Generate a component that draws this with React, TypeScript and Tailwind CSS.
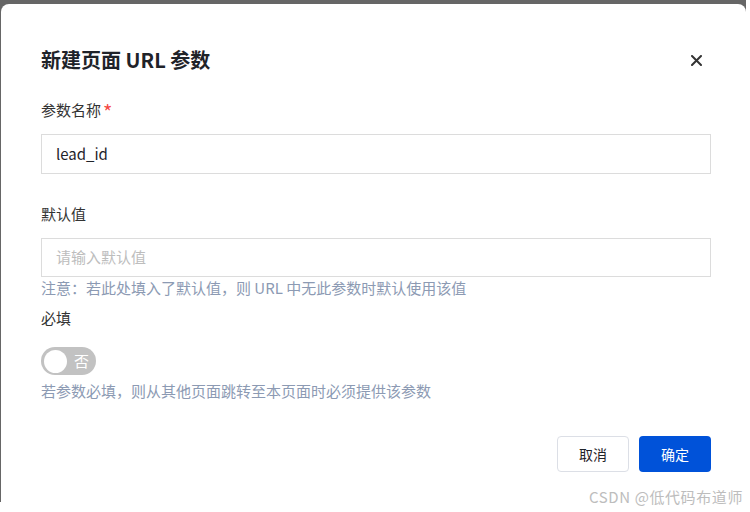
import React from "react";

export default function App() {
  const font = { fontFamily: '"Noto Sans CJK SC", "Noto Sans", "Liberation Sans", sans-serif' };
  return (
    <div className="relative w-[750px] h-[512px] bg-white overflow-hidden" style={font}>
      <div className="w-[746px] h-[502px] bg-[#666666] pt-[4px] pl-[1px]">
        <div className="w-[745px] h-[498px] bg-white rounded-t-[8px] pt-[42px] pl-[40px] pr-[35px]">
          <div className="flex items-center justify-between h-[28px]">
            <div className="text-[20px] leading-[28px] font-bold text-[#1f2329]">新建页面 URL 参数</div>
            <svg width="11" height="11" viewBox="0 0 11 11" className="mr-[9px]">
              <path d="M1 1 L10 10 M10 1 L1 10" stroke="#333" strokeWidth="2" strokeLinecap="round" />
            </svg>
          </div>

          <div className="mt-[25px] h-[22px] leading-[22px] text-[15px] text-[#333] flex items-center">
            参数名称<span className="text-[#f54a45] text-[20px] ml-[2px] leading-[22px] mt-[4px]">*</span>
          </div>
          <div className="mt-[13px] w-[670px] h-[40px] border border-[#dcdcdc] flex items-center px-[14px] text-[15px] text-[#1f2329]">
            lead_id
          </div>

          <div className="mt-[29px] h-[22px] leading-[22px] text-[15px] text-[#333]">默认值</div>
          <div className="mt-[13px] w-[670px] h-[39px] border border-[#dcdcdc] flex items-center px-[14px] text-[15px] text-[#bdbdbd]">
            请输入默认值
          </div>
          <div className="h-[22px] leading-[22px] text-[15px] text-[#8c9ab3]">
            注意：若此处填入了默认值，则 URL 中无此参数时默认使用该值
          </div>

          <div className="mt-[8px] h-[22px] leading-[22px] text-[15px] text-[#333]">必填</div>
          <div className="mt-[18px] w-[55px] h-[28px] rounded-full bg-[#c2c2c2] flex items-center pl-[3px]">
            <div className="w-[23px] h-[23px] rounded-full bg-white" />
            <span className="ml-[7px] text-[15px] leading-[22px] text-white">否</span>
          </div>
          <div className="mt-[5px] h-[22px] leading-[22px] text-[15px] text-[#8c9ab3]">
            若参数必填，则从其他页面跳转至本页面时必须提供该参数
          </div>

          <div className="mt-[34px] flex justify-end gap-[10px] w-[670px]">
            <div className="w-[72px] h-[36px] rounded-[4px] border border-[#dcdfe6] flex items-center justify-center text-[14px] text-[#1f2329]">
              取消
            </div>
            <div className="w-[72px] h-[36px] rounded-[4px] bg-[#0052d9] flex items-center justify-center text-[14px] text-white">
              确定
            </div>
          </div>
        </div>
      </div>
      <div className="absolute left-[589px] top-[486px] whitespace-nowrap text-[15px] tracking-[0.6px] leading-[22px] text-[#bdbdbd]">
        CSDN @低代码布道师
      </div>
    </div>
  );
}
